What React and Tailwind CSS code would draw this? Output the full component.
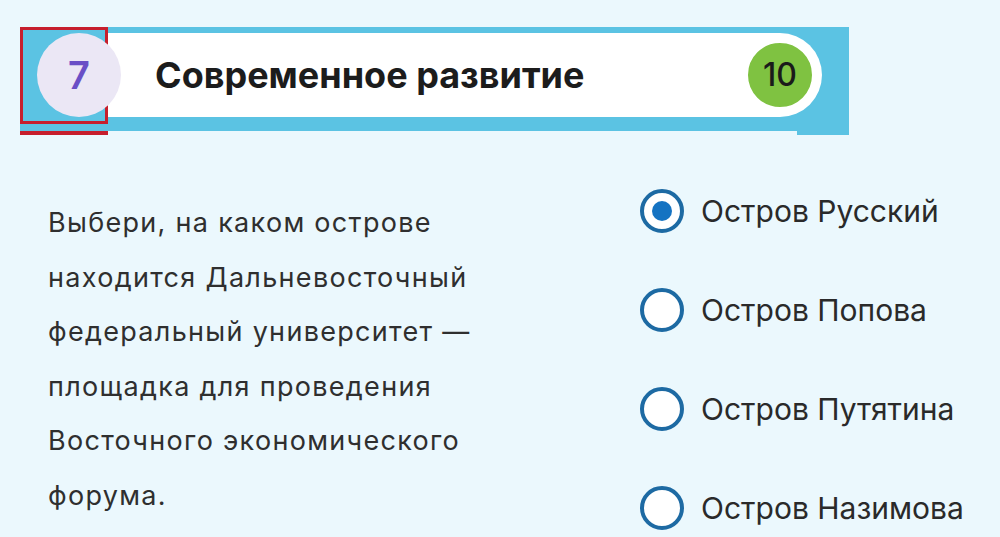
import React from 'react';

const options = [
  { label: 'Остров Русский', checked: true },
  { label: 'Остров Попова' },
  { label: 'Остров Путятина' },
  { label: 'Остров Назимова' },
];

const question = [
  'Выбери, на каком острове',
  'находится Дальневосточный',
  'федеральный университет —',
  'площадка для проведения',
  'Восточного экономического',
  'форума.',
];

function Radio({ checked }) {
  return (
    <div className="w-[44px] h-[44px] rounded-full border-[4px] border-[#1d6aa3] bg-white flex items-center justify-center shrink-0">
      {checked && <div className="w-[20px] h-[20px] rounded-full bg-[#1573c2]" />}
    </div>
  );
}

export default function App() {
  return (
    <div className="w-[1000px] h-[537px] bg-[#ebf8fd] overflow-hidden font-['Inter',sans-serif]">
      {/* header band */}
      <div className="relative ml-[20px] mt-[27px] w-[829px]">
        <div className="bg-[#5bc3e3] pt-[6px] pb-[14px] flex items-center">
          <div className="ml-[17px] w-[84px] h-[84px] rounded-full bg-[#ebe7f5] flex items-center justify-center z-10 shrink-0 -mr-[13px]">
            <span className="text-[38px] font-semibold text-[#6a4fc6] leading-none">7</span>
          </div>
          <div className="flex-1 mr-[27px] h-[84px] bg-white rounded-r-full flex items-center pl-[47px] pr-[8px]">
            <h1 className="flex-1 text-[36px] font-bold text-[#1c1c1c] leading-none">Современное развитие</h1>
            <div className="w-[68px] h-[68px] rounded-full bg-[#7fc241] border-[2px] border-white flex items-center justify-center">
              <span className="text-[32px] font-medium text-[#1a1a1a] leading-none">10</span>
            </div>
          </div>
        </div>
        <div className="flex justify-end">
          <div className="w-[52px] h-[4px] bg-[#5bc3e3]" />
        </div>
        {/* red annotation frame */}
        <div className="absolute left-0 top-0 w-[88px] h-[97px] border-[3px] border-[#c61f2d]" />
        <div className="absolute left-0 top-[104px] w-[88px] h-[4px] bg-[#c61f2d]" />
      </div>

      {/* body */}
      <div className="flex">
        <div className="ml-[48px] mt-[61px] w-[450px] text-[27px] leading-[54.5px] tracking-[1.3px] text-[#2f2f2f]">
          {question.map((l, i) => (
            <div key={i} className="whitespace-nowrap">{l}</div>
          ))}
        </div>
        <div className="ml-[142px] mt-[54px] flex flex-col gap-[55px]">
          {options.map((o, i) => (
            <div key={i} className="flex items-center h-[44px]">
              <Radio checked={o.checked} />
              <span className="ml-[17px] text-[30px] text-[#2a2a2a]">{o.label}</span>
            </div>
          ))}
        </div>
      </div>
    </div>
  );
}
